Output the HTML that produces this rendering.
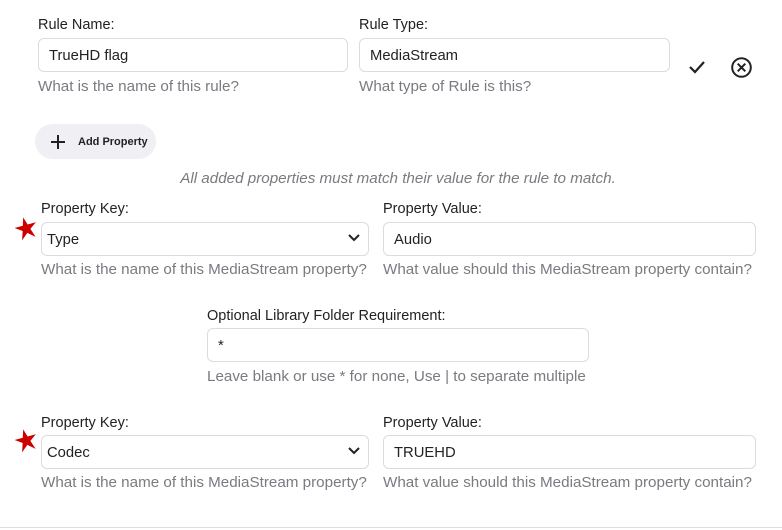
<!DOCTYPE html>
<html><head><meta charset="utf-8"><style>
body{margin:0;width:782px;height:530px;background:#fff;font-family:"Liberation Sans",sans-serif;position:relative;overflow:hidden;color:#1f1f24}
.a{position:absolute}
.lbl{font-size:14.5px;color:#222}
.hint{font-size:15.2px;color:#7a7a80;white-space:nowrap}
.in{position:absolute;box-sizing:border-box;border:1px solid #dcdce0;border-radius:6px;height:34px;font-size:14.8px;line-height:34px;padding-left:10px;color:#222}
.star{position:absolute}
</style></head><body>
<div class="a lbl" style="left:38px;top:17px">Rule Name:</div>
<div class="in" style="left:38px;top:38px;width:310px">TrueHD flag</div>
<div class="a hint" style="left:38px;top:78px">What is the name of this rule?</div>
<div class="a lbl" style="left:359px;top:17px">Rule Type:</div>
<div class="in" style="left:359px;top:38px;width:311px">MediaStream</div>
<div class="a hint" style="left:359px;top:78px">What type of Rule is this?</div>
<svg class="a" style="left:687px;top:58px" width="20" height="18" viewBox="0 0 20 18"><path d="M3 9l5 5 9-10" fill="none" stroke="#222" stroke-width="2.2"/></svg>
<svg class="a" style="left:730px;top:56px" width="23" height="23" viewBox="0 0 23 23"><circle cx="11.5" cy="11.5" r="9.3" fill="none" stroke="#222" stroke-width="2"/><path d="M7.7 7.7l7.6 7.6M15.3 7.7l-7.6 7.6" stroke="#222" stroke-width="2"/></svg>
<div class="a" style="left:35px;top:124px;width:121px;height:35px;border-radius:18px;background:#f0f0f4"></div>
<svg class="a" style="left:50px;top:134px" width="16" height="16"><path d="M8 1v14M1 8h14" stroke="#222" stroke-width="2"/></svg>
<div class="a" style="left:78px;top:136px;font-size:11px;font-weight:bold;color:#222">Add Property</div>
<div class="a hint" style="left:0;width:796px;text-align:center;top:170px;font-style:italic">All added properties must match their value for the rule to match.</div>

<svg class="star" style="left:14px;top:216px" width="24" height="24" viewBox="0 0 24 24"><polygon points="12,1 14.5,9 23,9 16,14 19,23 12,17 5,23 8,14 1,9 9.5,9" fill="#c00" transform="rotate(-15 12 12)"/></svg>
<div class="a lbl" style="left:41px;top:201px">Property Key:</div>
<div class="in" style="left:41px;top:222px;width:328px;padding-left:5px">Type</div>
<svg class="a" style="left:347px;top:233px" width="14" height="10"><path d="M2 2l5 5 5-5" fill="none" stroke="#222" stroke-width="2"/></svg>
<div class="a hint" style="left:41px;top:261px">What is the name of this MediaStream property?</div>
<div class="a lbl" style="left:383px;top:201px">Property Value:</div>
<div class="in" style="left:383px;top:222px;width:373px">Audio</div>
<div class="a hint" style="left:383px;top:261px">What value should this MediaStream property contain?</div>

<div class="a lbl" style="left:207px;top:308px">Optional Library Folder Requirement:</div>
<div class="in" style="left:207px;top:328px;width:382px">*</div>
<div class="a hint" style="left:207px;top:368px">Leave blank or use * for none, Use | to separate multiple</div>

<svg class="star" style="left:14px;top:428px" width="24" height="24" viewBox="0 0 24 24"><polygon points="12,1 14.5,9 23,9 16,14 19,23 12,17 5,23 8,14 1,9 9.5,9" fill="#c00" transform="rotate(-15 12 12)"/></svg>
<div class="a lbl" style="left:41px;top:415px">Property Key:</div>
<div class="in" style="left:41px;top:435px;width:328px;padding-left:5px">Codec</div>
<svg class="a" style="left:347px;top:446px" width="14" height="10"><path d="M2 2l5 5 5-5" fill="none" stroke="#222" stroke-width="2"/></svg>
<div class="a hint" style="left:41px;top:474px">What is the name of this MediaStream property?</div>
<div class="a lbl" style="left:383px;top:415px">Property Value:</div>
<div class="in" style="left:383px;top:435px;width:373px">TRUEHD</div>
<div class="a hint" style="left:383px;top:474px">What value should this MediaStream property contain?</div>
<div class="a" style="left:0;top:527px;width:782px;height:1px;background:#ddd"></div>
</body></html>
